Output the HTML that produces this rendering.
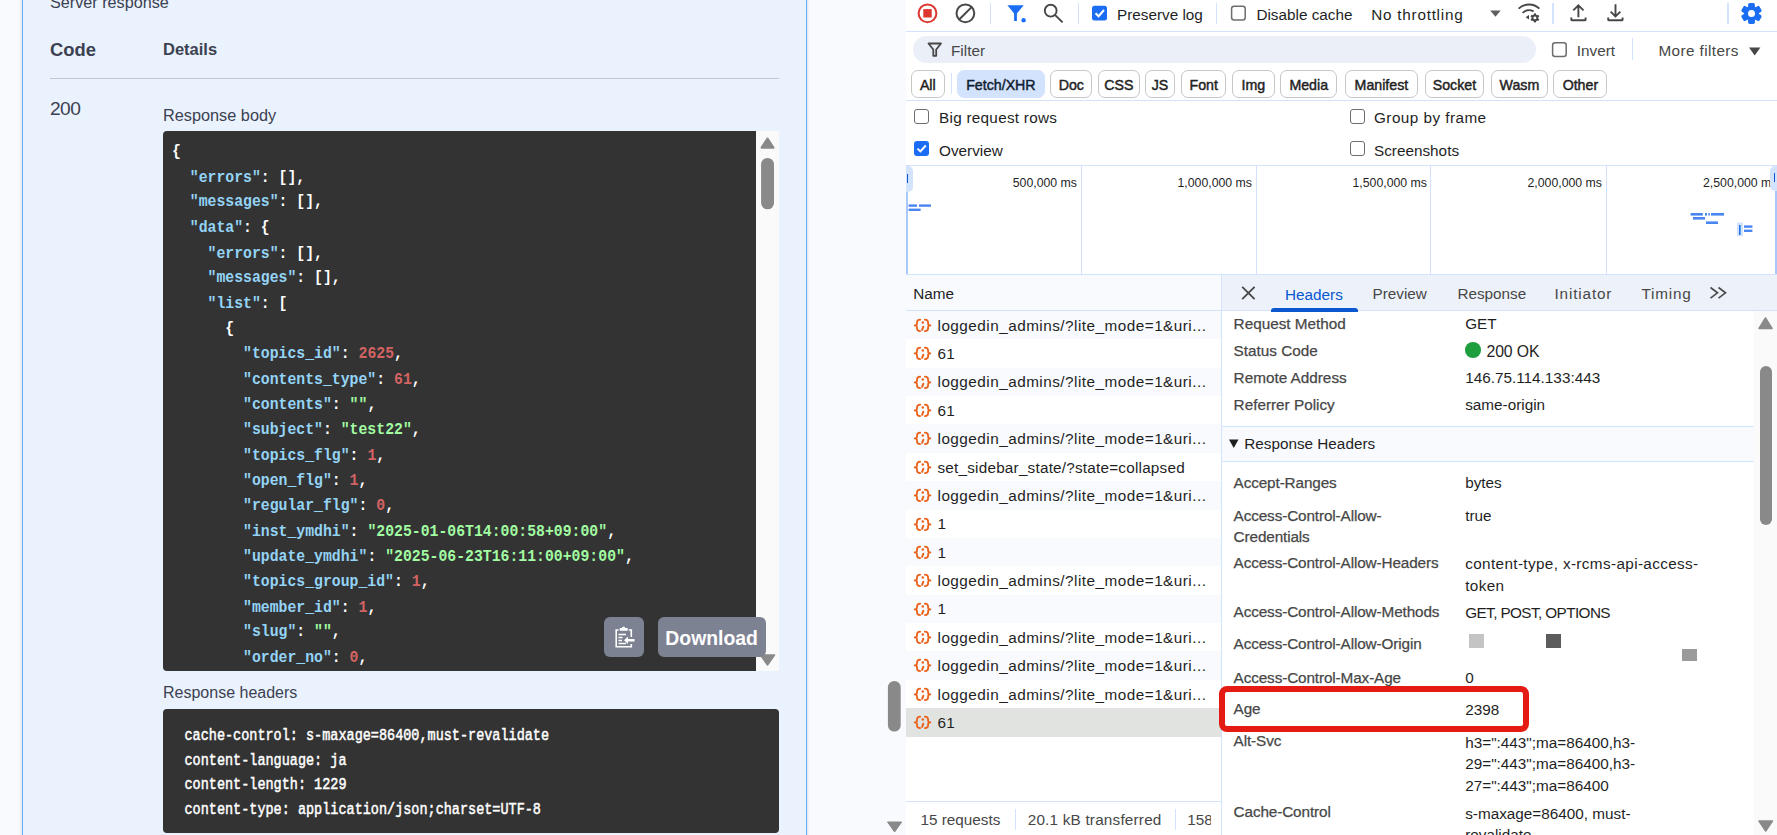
<!DOCTYPE html>
<html><head><meta charset="utf-8">
<style>
*{margin:0;padding:0;box-sizing:border-box}
html,body{width:1777px;height:835px;overflow:hidden;background:#f9fafd;font-family:"Liberation Sans",sans-serif}
.a{position:absolute;white-space:pre}
.r{position:absolute}
.sw{color:#3b4151}
.k{color:#94d4f6}.s{color:#a2fca2}.n{color:#d36363}
#dt{position:absolute;left:906px;top:0;width:871px;height:835px;background:#fff;overflow:hidden;color:#1f1f1f;font-size:15.3px}
.hl{position:absolute;height:1px;background:#d3e3fd}
.vl{position:absolute;width:1px;background:#d3e3fd}
.cb{position:absolute;width:15px;height:15px;border:1.5px solid #6d6d6d;border-radius:3px;background:#fff}
.cbc{position:absolute;width:15px;height:15px;border-radius:3px;background:#1b6ef3}
.chip{position:absolute;top:70.2px;height:27.8px;border:1px solid #c7c7c7;border-radius:7px;font-size:14.2px;text-align:center;line-height:29px;color:#1f1f1f;-webkit-text-stroke:0.45px #1f1f1f}
.g{color:#474747}
.lb{color:#474747;-webkit-text-stroke:0.25px #474747}
</style></head><body>

<div class="r" style="left:22px;top:-40px;width:785px;height:900px;background:#eaf2fd;border:1px solid #61affe;box-shadow:0 0 3px rgba(0,0,0,.19)"></div>
<div class="a sw" style="left:50px;top:-7.13px;font-size:16.2px;">Server response</div>
<div class="a sw" style="left:50px;top:38.95px;font-size:18.4px;font-weight:bold;">Code</div>
<div class="a sw" style="left:163px;top:39.80px;font-size:16.5px;font-weight:bold;">Details</div>
<div class="r" style="left:50px;top:78px;width:729px;height:1px;background:#c3c9d1"></div>
<div class="a sw" style="left:50px;top:97.91px;font-size:19.2px;letter-spacing:-0.6px">200</div>
<div class="a sw" style="left:163px;top:105.58px;font-size:16.3px;">Response body</div>
<div class="r" style="left:163px;top:131px;width:593px;height:540px;background:#333;border-radius:4px 0 0 4px;overflow:hidden">
<pre class="a" style="left:9px;top:9.44px;font-family:'Liberation Mono',monospace;font-weight:bold;font-size:14.8px;line-height:23.6449px;color:#fff;transform:scaleY(1.07);transform-origin:0 0">{
  <span class="k">"errors"</span>: [],
  <span class="k">"messages"</span>: [],
  <span class="k">"data"</span>: {
    <span class="k">"errors"</span>: [],
    <span class="k">"messages"</span>: [],
    <span class="k">"list"</span>: [
      {
        <span class="k">"topics_id"</span>: <span class="n">2625</span>,
        <span class="k">"contents_type"</span>: <span class="n">61</span>,
        <span class="k">"contents"</span>: <span class="s">""</span>,
        <span class="k">"subject"</span>: <span class="s">"test22"</span>,
        <span class="k">"topics_flg"</span>: <span class="n">1</span>,
        <span class="k">"open_flg"</span>: <span class="n">1</span>,
        <span class="k">"regular_flg"</span>: <span class="n">0</span>,
        <span class="k">"inst_ymdhi"</span>: <span class="s">"2025-01-06T14:00:58+09:00"</span>,
        <span class="k">"update_ymdhi"</span>: <span class="s">"2025-06-23T16:11:00+09:00"</span>,
        <span class="k">"topics_group_id"</span>: <span class="n">1</span>,
        <span class="k">"member_id"</span>: <span class="n">1</span>,
        <span class="k">"slug"</span>: <span class="s">""</span>,
        <span class="k">"order_no"</span>: <span class="n">0</span>,
        <span class="k">"group_nm"</span>: <span class="s">"test"</span>,</pre></div>
<div class="r" style="left:756px;top:131px;width:23px;height:540px;background:#fafafa"></div>
<svg class="a" style="left:756px;top:131px" width="23" height="540"><path d="M5.6 16.6 L11.5 7.6 L17.4 16.6 Z" fill="#898989" stroke="#898989" stroke-width="2.2" stroke-linejoin="round"/><rect x="5.1" y="27" width="12.9" height="51.3" rx="6.4" fill="#898989"/><path d="M4.5 524 L11.5 534 L18.5 524 Z" fill="#898989" stroke="#898989" stroke-width="1.5" stroke-linejoin="round"/></svg>
<div class="r" style="left:604px;top:617px;width:40px;height:40px;background:#7d8293;border-radius:6px"></div>
<svg class="a" style="left:604px;top:617px" width="40" height="40"><g fill="none" stroke="#fff" stroke-width="1.6">
<path d="M14.5 13 H12.2 V29.8 H27.3 V27"/><path d="M24.8 13 H27.3 V20"/>
<path d="M16 13.2 H23.3 V11.5 H21.4 A1.8 1.8 0 0 0 17.9 11.5 H16 Z" fill="#fff" stroke-width="1"/>
<path d="M14.5 17.5 H22 M14.5 20.5 H18.5 M14.5 23.5 H18 M14.5 26.5 H22"/>
</g><path d="M20 23.2 L24 19.5 V22 H30.5 V24.5 H24 V27 Z" fill="#fff"/></svg>
<div class="r" style="left:658px;top:617px;width:108px;height:40px;background:#7d8293;border-radius:6px"></div>
<div class="a" style="left:665.3px;top:627.03px;font-size:19.4px;font-weight:bold;color:#fff">Download</div>
<div class="a sw" style="left:163px;top:684.16px;font-size:16px;">Response headers</div>
<div class="r" style="left:163px;top:709px;width:616px;height:124px;background:#333;border-radius:4px"></div>
<div class="a" style="left:184.5px;top:726.23px;font-family:'Liberation Mono',monospace;font-size:13.5px;line-height:15.29px;color:#fff;transform:scaleY(1.27);transform-origin:0 0;-webkit-text-stroke:0.4px #fff">cache-control: s-maxage=86400,must-revalidate</div>
<div class="a" style="left:184.5px;top:750.73px;font-family:'Liberation Mono',monospace;font-size:13.5px;line-height:15.29px;color:#fff;transform:scaleY(1.27);transform-origin:0 0;-webkit-text-stroke:0.4px #fff">content-language: ja</div>
<div class="a" style="left:184.5px;top:775.13px;font-family:'Liberation Mono',monospace;font-size:13.5px;line-height:15.29px;color:#fff;transform:scaleY(1.27);transform-origin:0 0;-webkit-text-stroke:0.4px #fff">content-length: 1229</div>
<div class="a" style="left:184.5px;top:799.53px;font-family:'Liberation Mono',monospace;font-size:13.5px;line-height:15.29px;color:#fff;transform:scaleY(1.27);transform-origin:0 0;-webkit-text-stroke:0.4px #fff">content-type: application/json;charset=UTF-8</div>
<svg class="a" style="left:880px;top:0" width="26" height="835"><rect x="7.9" y="681" width="12.8" height="50.6" rx="6.4" fill="#898989"/><path d="M7.5 822 H21.7 L14.6 832 Z" fill="#898989" stroke="#898989" stroke-width="1" stroke-linejoin="round"/></svg>
<div id="dt">
<svg class="a" style="left:0;top:0" width="871" height="31">
 <circle cx="21.5" cy="13.3" r="8.9" fill="none" stroke="#dc362e" stroke-width="2"/>
 <rect x="17.3" y="9.1" width="8.4" height="8.4" fill="#dc362e"/>
 <circle cx="59.4" cy="13.3" r="8.9" fill="none" stroke="#474747" stroke-width="2"/>
 <line x1="53.2" y1="19.5" x2="65.6" y2="7.1" stroke="#474747" stroke-width="2"/>
 <path d="M101.4 5.3 H117.7 L110.9 13.4 V21 H108.1 V13.4 Z" fill="#1b6ef3"/>
 <circle cx="117.6" cy="20.2" r="2.2" fill="#1b6ef3"/>
 <circle cx="144.7" cy="10.7" r="5.9" fill="none" stroke="#474747" stroke-width="1.9"/>
 <line x1="148.9" y1="14.9" x2="156.6" y2="22.4" stroke="#474747" stroke-width="2"/>
 <rect x="186" y="5.8" width="15" height="14.7" rx="2.5" fill="#1b6ef3"/>
 <path d="M189.5 13.2 L192.6 16.2 L198 10" fill="none" stroke="#fff" stroke-width="2"/>
 <rect x="325.6" y="6.3" width="13.6" height="13.6" rx="2.5" fill="none" stroke="#6d6d6d" stroke-width="1.5"/>
 <path d="M584.2 10.4 H594.7 L589.45 16.7 Z" fill="#5e5e5e"/>
 <g fill="none" stroke="#474747" stroke-width="1.8">
  <path d="M612.6 8.7 A15 15 0 0 1 633.4 8.7"/>
  <path d="M616.6 12.9 A9.5 9.5 0 0 1 627.6 11.4"/>
 </g>
 <path d="M619.6 17.2 L623 14.9 V19.5 Z" fill="#474747"/>
 <g transform="translate(628.9,17.9)">
  <g fill="#474747"><rect x="-1.1" y="-4.5" width="2.2" height="9"/><rect x="-1.1" y="-4.5" width="2.2" height="9" transform="rotate(60)"/><rect x="-1.1" y="-4.5" width="2.2" height="9" transform="rotate(120)"/><circle r="3.4"/></g>
  <circle r="1.45" fill="#fff"/>
 </g>
 <path d="M672.4 5.6 V17.2 M667.3 10.4 L672.4 5.3 L677.5 10.4" fill="none" stroke="#474747" stroke-width="1.9"/>
 <path d="M665.3 17.4 V19.4 Q665.3 20.3 666.2 20.3 H678.7 Q679.6 20.3 679.6 19.4 V17.4" fill="none" stroke="#474747" stroke-width="1.9"/>
 <path d="M709.5 4.2 V16 M704.6 11.6 L709.5 16.5 L714.4 11.6" fill="none" stroke="#474747" stroke-width="1.9"/>
 <path d="M702.2 17.4 V19.4 Q702.2 20.3 703.1 20.3 H715.7 Q716.6 20.3 716.6 19.4 V17.4" fill="none" stroke="#474747" stroke-width="1.9"/>
 <g transform="translate(845.5,13.5)" fill="#1b6ef3">
  <circle r="7.4"/>
  <rect x="-3.4" y="-10.4" width="6.8" height="20.8" rx="1.6"/>
  <rect x="-3.4" y="-10.4" width="6.8" height="20.8" rx="1.6" transform="rotate(60)"/>
  <rect x="-3.4" y="-10.4" width="6.8" height="20.8" rx="1.6" transform="rotate(120)"/>
  <circle r="3.5" fill="#fff"/>
 </g>
</svg>
<div class="vl" style="left:84px;top:3px;height:21px;width:1px"></div>
<div class="vl" style="left:172px;top:3px;height:21px;width:1px"></div>
<div class="vl" style="left:310px;top:3px;height:21px;width:1px"></div>
<div class="vl" style="left:646px;top:3px;height:21px;width:2px"></div>
<div class="vl" style="left:821px;top:3px;height:21px;width:2px"></div>
<div class="a " style="left:211.00px;top:5.80px;">Preserve log</div>
<div class="a " style="left:350.40px;top:5.80px;">Disable cache</div>
<div class="a " style="left:465.30px;top:5.70px;letter-spacing:0.74px">No throttling</div>
<div class="hl" style="left:0;top:31px;width:871px"></div>
<div class="r" style="left:7px;top:36.2px;width:623px;height:26.6px;border-radius:14px;background:#eaeff8"></div>
<svg class="a" style="left:0;top:31px" width="871" height="70">
 <path d="M22.5 12.5 H35 L30.2 18.5 V24.8 H27.3 V18.5 Z" fill="none" stroke="#474747" stroke-width="1.8" stroke-linejoin="round"/>
 <rect x="646.6" y="11.8" width="13.6" height="13.6" rx="2.5" fill="none" stroke="#6d6d6d" stroke-width="1.5"/>
 <path d="M843 16.4 H854.4 L848.7 24.6 Z" fill="#474747"/>
</svg>
<div class="a g" style="left:45.00px;top:42.00px;">Filter</div>
<div class="a g" style="left:670.80px;top:42.00px;">Invert</div>
<div class="vl" style="left:726.3px;top:38px;height:22px"></div>
<div class="a g" style="left:752.40px;top:42.00px;letter-spacing:0.4px">More filters</div>
<div class="chip" style="left:5.0px;width:33.6px;">All</div>
<div class="chip" style="left:51.0px;width:87.8px;background:#d3e3fd;border-color:#d3e3fd;color:#041e49;">Fetch/XHR</div>
<div class="chip" style="left:144.2px;width:42.2px;">Doc</div>
<div class="chip" style="left:192.0px;width:41.7px;">CSS</div>
<div class="chip" style="left:239.3px;width:29.3px;">JS</div>
<div class="chip" style="left:275.0px;width:45.4px;">Font</div>
<div class="chip" style="left:326.0px;width:42.6px;">Img</div>
<div class="chip" style="left:374.2px;width:57.1px;">Media</div>
<div class="chip" style="left:438.5px;width:73.8px;">Manifest</div>
<div class="chip" style="left:518.6px;width:59.7px;">Socket</div>
<div class="chip" style="left:585.2px;width:56.5px;">Wasm</div>
<div class="chip" style="left:647.4px;width:54.0px;">Other</div>
<div class="vl" style="left:45.4px;top:73px;height:21px"></div>
<div class="hl" style="left:0;top:100px;width:871px"></div>
<div class="cb" style="left:8px;top:109px"></div>
<div class="a " style="left:33.00px;top:108.70px;letter-spacing:0.27px">Big request rows</div>
<div class="cbc" style="left:8px;top:141px"><svg width="15" height="15" style="position:absolute;left:0;top:0"><path d="M3.5 7.6 L6.4 10.4 L11.8 4.5" fill="none" stroke="#fff" stroke-width="2"/></svg></div>
<div class="a " style="left:33.00px;top:141.60px;">Overview</div>
<div class="cb" style="left:444.3px;top:109px"></div>
<div class="a " style="left:468.00px;top:108.70px;letter-spacing:0.45px">Group by frame</div>
<div class="cb" style="left:444.3px;top:141px"></div>
<div class="a " style="left:468.00px;top:141.60px;">Screenshots</div>
<div class="hl" style="left:0;top:165px;width:871px"></div>
<div class="vl" style="left:175px;top:166px;height:108px"></div>
<div class="vl" style="left:350px;top:166px;height:108px"></div>
<div class="vl" style="left:524px;top:166px;height:108px"></div>
<div class="vl" style="left:700px;top:166px;height:108px"></div>
<div class="a" style="right:700.0px;top:175.67px;font-size:12.3px">500,000 ms</div>
<div class="a" style="right:525.0px;top:175.67px;font-size:12.3px">1,000,000 ms</div>
<div class="a" style="right:350.0px;top:175.67px;font-size:12.3px">1,500,000 ms</div>
<div class="a" style="right:175.0px;top:175.67px;font-size:12.3px">2,000,000 ms</div>
<div class="a" style="left:797px;top:175.67px;font-size:12.3px">2,500,000 ms</div>
<div class="r" style="left:0;top:166px;width:6.6px;height:26px;background:#d3e3fd;border-radius:0 5px 5px 0"></div>
<div class="r" style="left:1px;top:174px;width:1.2px;height:9px;background:#0b57d0"></div>
<div class="r" style="left:0;top:192px;width:2px;height:82px;background:#a8c7fa"></div>
<div class="r" style="left:864.4px;top:166px;width:6.6px;height:25px;background:#d3e3fd;border-radius:5px 0 0 5px"></div>
<div class="r" style="left:867.5px;top:173px;width:1.2px;height:9px;background:#0b57d0"></div>
<div class="r" style="left:869px;top:191px;width:2px;height:83px;background:#a8c7fa"></div>
<svg class="a" style="left:0;top:166px" width="871" height="108">
 <g fill="#4a86f0">
  <rect x="2.6" y="38.4" width="8.4" height="2.4"/><rect x="13" y="38.4" width="12" height="2.4"/>
  <rect x="2.6" y="42.6" width="12" height="2.4"/>
  <rect x="784.6" y="47" width="12.2" height="2.6"/><rect x="799" y="47" width="2" height="2.6"/><rect x="802.3" y="47" width="1.5" height="2.6"/><rect x="805" y="47" width="13" height="2.6"/>
  <rect x="787" y="51" width="12" height="2.6"/>
  <rect x="800" y="55.4" width="12" height="2.6"/>
  <rect x="838" y="59.4" width="8.4" height="2.4"/><rect x="838" y="63.6" width="8.4" height="2.4"/>
 </g>
 <rect x="831" y="56.6" width="6" height="13.6" fill="#d3e3fd"/>
 <rect x="833" y="59" width="1.6" height="10" fill="#1a73e8"/>
</svg>
<div class="hl" style="left:0;top:274px;width:871px"></div>
<div class="r" style="left:0;top:275px;width:315px;height:35.5px;background:#f8fafd"></div>
<div class="r" style="left:316px;top:275px;width:555px;height:35.5px;background:#edf2fa"></div>
<div class="a " style="left:7.30px;top:284.60px;">Name</div>
<div class="hl" style="left:0;top:310px;width:871px"></div>
<div class="vl" style="left:315px;top:275px;height:560px"></div>
<svg class="a" style="left:316px;top:275px" width="555" height="36">
 <path d="M20.2 11.8 L32.6 24.2 M32.6 11.8 L20.2 24.2" stroke="#474747" stroke-width="1.8"/>
 <path d="M488.5 12.5 L495.5 17.8 L488.5 23.1 M496.5 12.5 L503.5 17.8 L496.5 23.1" fill="none" stroke="#474747" stroke-width="1.6"/>
</svg>
<div class="a " style="left:379.00px;top:285.50px;color:#0b57d0">Headers</div>
<div class="r" style="left:365px;top:307.6px;width:87px;height:4px;background:#0b57d0;border-radius:3px 3px 0 0"></div>
<div class="a g" style="left:466.50px;top:285.40px;">Preview</div>
<div class="a g" style="left:551.40px;top:285.30px;">Response</div>
<div class="a g" style="left:648.50px;top:285.30px;letter-spacing:0.85px">Initiator</div>
<div class="a g" style="left:735.40px;top:285.30px;letter-spacing:0.8px">Timing</div>
<div class="r" style="left:0;top:311.00px;width:315px;height:28.37px;background:#f8fafd"></div>
<svg class="a" style="left:6px;top:317.00px" width="22" height="17"><g fill="none" stroke="#e9621a" stroke-width="1.8" stroke-linecap="round" stroke-linejoin="round"><path d="M8.2 2.7 Q5 2.7 5 5.6 V6.5 Q5 8.4 2.7 8.4 Q5 8.4 5 10.3 V11.2 Q5 14.1 8.2 14.1"/><path d="M12.9 2.7 Q16.1 2.7 16.1 5.6 V6.5 Q16.1 8.4 18.4 8.4 Q16.1 8.4 16.1 10.3 V11.2 Q16.1 14.1 12.9 14.1"/><path d="M11.3 9.8 L10.1 12.8" stroke-width="2"/></g><circle cx="10.8" cy="5.6" r="1.25" fill="#e9621a"/></svg>
<div class="a " style="left:31.50px;top:316.70px;letter-spacing:0.48px">loggedin_admins/?lite_mode=1&amp;uri...</div>
<div class="r" style="left:0;top:339.37px;width:315px;height:28.37px;background:#fff"></div>
<svg class="a" style="left:6px;top:345.37px" width="22" height="17"><g fill="none" stroke="#e9621a" stroke-width="1.8" stroke-linecap="round" stroke-linejoin="round"><path d="M8.2 2.7 Q5 2.7 5 5.6 V6.5 Q5 8.4 2.7 8.4 Q5 8.4 5 10.3 V11.2 Q5 14.1 8.2 14.1"/><path d="M12.9 2.7 Q16.1 2.7 16.1 5.6 V6.5 Q16.1 8.4 18.4 8.4 Q16.1 8.4 16.1 10.3 V11.2 Q16.1 14.1 12.9 14.1"/><path d="M11.3 9.8 L10.1 12.8" stroke-width="2"/></g><circle cx="10.8" cy="5.6" r="1.25" fill="#e9621a"/></svg>
<div class="a " style="left:31.50px;top:345.07px;letter-spacing:0.3px">61</div>
<div class="r" style="left:0;top:367.74px;width:315px;height:28.37px;background:#f8fafd"></div>
<svg class="a" style="left:6px;top:373.74px" width="22" height="17"><g fill="none" stroke="#e9621a" stroke-width="1.8" stroke-linecap="round" stroke-linejoin="round"><path d="M8.2 2.7 Q5 2.7 5 5.6 V6.5 Q5 8.4 2.7 8.4 Q5 8.4 5 10.3 V11.2 Q5 14.1 8.2 14.1"/><path d="M12.9 2.7 Q16.1 2.7 16.1 5.6 V6.5 Q16.1 8.4 18.4 8.4 Q16.1 8.4 16.1 10.3 V11.2 Q16.1 14.1 12.9 14.1"/><path d="M11.3 9.8 L10.1 12.8" stroke-width="2"/></g><circle cx="10.8" cy="5.6" r="1.25" fill="#e9621a"/></svg>
<div class="a " style="left:31.50px;top:373.44px;letter-spacing:0.48px">loggedin_admins/?lite_mode=1&amp;uri...</div>
<div class="r" style="left:0;top:396.11px;width:315px;height:28.37px;background:#fff"></div>
<svg class="a" style="left:6px;top:402.11px" width="22" height="17"><g fill="none" stroke="#e9621a" stroke-width="1.8" stroke-linecap="round" stroke-linejoin="round"><path d="M8.2 2.7 Q5 2.7 5 5.6 V6.5 Q5 8.4 2.7 8.4 Q5 8.4 5 10.3 V11.2 Q5 14.1 8.2 14.1"/><path d="M12.9 2.7 Q16.1 2.7 16.1 5.6 V6.5 Q16.1 8.4 18.4 8.4 Q16.1 8.4 16.1 10.3 V11.2 Q16.1 14.1 12.9 14.1"/><path d="M11.3 9.8 L10.1 12.8" stroke-width="2"/></g><circle cx="10.8" cy="5.6" r="1.25" fill="#e9621a"/></svg>
<div class="a " style="left:31.50px;top:401.81px;letter-spacing:0.3px">61</div>
<div class="r" style="left:0;top:424.48px;width:315px;height:28.37px;background:#f8fafd"></div>
<svg class="a" style="left:6px;top:430.48px" width="22" height="17"><g fill="none" stroke="#e9621a" stroke-width="1.8" stroke-linecap="round" stroke-linejoin="round"><path d="M8.2 2.7 Q5 2.7 5 5.6 V6.5 Q5 8.4 2.7 8.4 Q5 8.4 5 10.3 V11.2 Q5 14.1 8.2 14.1"/><path d="M12.9 2.7 Q16.1 2.7 16.1 5.6 V6.5 Q16.1 8.4 18.4 8.4 Q16.1 8.4 16.1 10.3 V11.2 Q16.1 14.1 12.9 14.1"/><path d="M11.3 9.8 L10.1 12.8" stroke-width="2"/></g><circle cx="10.8" cy="5.6" r="1.25" fill="#e9621a"/></svg>
<div class="a " style="left:31.50px;top:430.18px;letter-spacing:0.48px">loggedin_admins/?lite_mode=1&amp;uri...</div>
<div class="r" style="left:0;top:452.85px;width:315px;height:28.37px;background:#fff"></div>
<svg class="a" style="left:6px;top:458.85px" width="22" height="17"><g fill="none" stroke="#e9621a" stroke-width="1.8" stroke-linecap="round" stroke-linejoin="round"><path d="M8.2 2.7 Q5 2.7 5 5.6 V6.5 Q5 8.4 2.7 8.4 Q5 8.4 5 10.3 V11.2 Q5 14.1 8.2 14.1"/><path d="M12.9 2.7 Q16.1 2.7 16.1 5.6 V6.5 Q16.1 8.4 18.4 8.4 Q16.1 8.4 16.1 10.3 V11.2 Q16.1 14.1 12.9 14.1"/><path d="M11.3 9.8 L10.1 12.8" stroke-width="2"/></g><circle cx="10.8" cy="5.6" r="1.25" fill="#e9621a"/></svg>
<div class="a " style="left:31.50px;top:458.55px;letter-spacing:0.21px">set_sidebar_state/?state=collapsed</div>
<div class="r" style="left:0;top:481.22px;width:315px;height:28.37px;background:#f8fafd"></div>
<svg class="a" style="left:6px;top:487.22px" width="22" height="17"><g fill="none" stroke="#e9621a" stroke-width="1.8" stroke-linecap="round" stroke-linejoin="round"><path d="M8.2 2.7 Q5 2.7 5 5.6 V6.5 Q5 8.4 2.7 8.4 Q5 8.4 5 10.3 V11.2 Q5 14.1 8.2 14.1"/><path d="M12.9 2.7 Q16.1 2.7 16.1 5.6 V6.5 Q16.1 8.4 18.4 8.4 Q16.1 8.4 16.1 10.3 V11.2 Q16.1 14.1 12.9 14.1"/><path d="M11.3 9.8 L10.1 12.8" stroke-width="2"/></g><circle cx="10.8" cy="5.6" r="1.25" fill="#e9621a"/></svg>
<div class="a " style="left:31.50px;top:486.92px;letter-spacing:0.48px">loggedin_admins/?lite_mode=1&amp;uri...</div>
<div class="r" style="left:0;top:509.59px;width:315px;height:28.37px;background:#fff"></div>
<svg class="a" style="left:6px;top:515.59px" width="22" height="17"><g fill="none" stroke="#e9621a" stroke-width="1.8" stroke-linecap="round" stroke-linejoin="round"><path d="M8.2 2.7 Q5 2.7 5 5.6 V6.5 Q5 8.4 2.7 8.4 Q5 8.4 5 10.3 V11.2 Q5 14.1 8.2 14.1"/><path d="M12.9 2.7 Q16.1 2.7 16.1 5.6 V6.5 Q16.1 8.4 18.4 8.4 Q16.1 8.4 16.1 10.3 V11.2 Q16.1 14.1 12.9 14.1"/><path d="M11.3 9.8 L10.1 12.8" stroke-width="2"/></g><circle cx="10.8" cy="5.6" r="1.25" fill="#e9621a"/></svg>
<div class="a " style="left:31.50px;top:515.29px;letter-spacing:0.3px">1</div>
<div class="r" style="left:0;top:537.96px;width:315px;height:28.37px;background:#f8fafd"></div>
<svg class="a" style="left:6px;top:543.96px" width="22" height="17"><g fill="none" stroke="#e9621a" stroke-width="1.8" stroke-linecap="round" stroke-linejoin="round"><path d="M8.2 2.7 Q5 2.7 5 5.6 V6.5 Q5 8.4 2.7 8.4 Q5 8.4 5 10.3 V11.2 Q5 14.1 8.2 14.1"/><path d="M12.9 2.7 Q16.1 2.7 16.1 5.6 V6.5 Q16.1 8.4 18.4 8.4 Q16.1 8.4 16.1 10.3 V11.2 Q16.1 14.1 12.9 14.1"/><path d="M11.3 9.8 L10.1 12.8" stroke-width="2"/></g><circle cx="10.8" cy="5.6" r="1.25" fill="#e9621a"/></svg>
<div class="a " style="left:31.50px;top:543.66px;letter-spacing:0.3px">1</div>
<div class="r" style="left:0;top:566.33px;width:315px;height:28.37px;background:#fff"></div>
<svg class="a" style="left:6px;top:572.33px" width="22" height="17"><g fill="none" stroke="#e9621a" stroke-width="1.8" stroke-linecap="round" stroke-linejoin="round"><path d="M8.2 2.7 Q5 2.7 5 5.6 V6.5 Q5 8.4 2.7 8.4 Q5 8.4 5 10.3 V11.2 Q5 14.1 8.2 14.1"/><path d="M12.9 2.7 Q16.1 2.7 16.1 5.6 V6.5 Q16.1 8.4 18.4 8.4 Q16.1 8.4 16.1 10.3 V11.2 Q16.1 14.1 12.9 14.1"/><path d="M11.3 9.8 L10.1 12.8" stroke-width="2"/></g><circle cx="10.8" cy="5.6" r="1.25" fill="#e9621a"/></svg>
<div class="a " style="left:31.50px;top:572.03px;letter-spacing:0.48px">loggedin_admins/?lite_mode=1&amp;uri...</div>
<div class="r" style="left:0;top:594.70px;width:315px;height:28.37px;background:#f8fafd"></div>
<svg class="a" style="left:6px;top:600.70px" width="22" height="17"><g fill="none" stroke="#e9621a" stroke-width="1.8" stroke-linecap="round" stroke-linejoin="round"><path d="M8.2 2.7 Q5 2.7 5 5.6 V6.5 Q5 8.4 2.7 8.4 Q5 8.4 5 10.3 V11.2 Q5 14.1 8.2 14.1"/><path d="M12.9 2.7 Q16.1 2.7 16.1 5.6 V6.5 Q16.1 8.4 18.4 8.4 Q16.1 8.4 16.1 10.3 V11.2 Q16.1 14.1 12.9 14.1"/><path d="M11.3 9.8 L10.1 12.8" stroke-width="2"/></g><circle cx="10.8" cy="5.6" r="1.25" fill="#e9621a"/></svg>
<div class="a " style="left:31.50px;top:600.40px;letter-spacing:0.3px">1</div>
<div class="r" style="left:0;top:623.07px;width:315px;height:28.37px;background:#fff"></div>
<svg class="a" style="left:6px;top:629.07px" width="22" height="17"><g fill="none" stroke="#e9621a" stroke-width="1.8" stroke-linecap="round" stroke-linejoin="round"><path d="M8.2 2.7 Q5 2.7 5 5.6 V6.5 Q5 8.4 2.7 8.4 Q5 8.4 5 10.3 V11.2 Q5 14.1 8.2 14.1"/><path d="M12.9 2.7 Q16.1 2.7 16.1 5.6 V6.5 Q16.1 8.4 18.4 8.4 Q16.1 8.4 16.1 10.3 V11.2 Q16.1 14.1 12.9 14.1"/><path d="M11.3 9.8 L10.1 12.8" stroke-width="2"/></g><circle cx="10.8" cy="5.6" r="1.25" fill="#e9621a"/></svg>
<div class="a " style="left:31.50px;top:628.77px;letter-spacing:0.48px">loggedin_admins/?lite_mode=1&amp;uri...</div>
<div class="r" style="left:0;top:651.44px;width:315px;height:28.37px;background:#f8fafd"></div>
<svg class="a" style="left:6px;top:657.44px" width="22" height="17"><g fill="none" stroke="#e9621a" stroke-width="1.8" stroke-linecap="round" stroke-linejoin="round"><path d="M8.2 2.7 Q5 2.7 5 5.6 V6.5 Q5 8.4 2.7 8.4 Q5 8.4 5 10.3 V11.2 Q5 14.1 8.2 14.1"/><path d="M12.9 2.7 Q16.1 2.7 16.1 5.6 V6.5 Q16.1 8.4 18.4 8.4 Q16.1 8.4 16.1 10.3 V11.2 Q16.1 14.1 12.9 14.1"/><path d="M11.3 9.8 L10.1 12.8" stroke-width="2"/></g><circle cx="10.8" cy="5.6" r="1.25" fill="#e9621a"/></svg>
<div class="a " style="left:31.50px;top:657.14px;letter-spacing:0.48px">loggedin_admins/?lite_mode=1&amp;uri...</div>
<div class="r" style="left:0;top:679.81px;width:315px;height:28.37px;background:#fff"></div>
<svg class="a" style="left:6px;top:685.81px" width="22" height="17"><g fill="none" stroke="#e9621a" stroke-width="1.8" stroke-linecap="round" stroke-linejoin="round"><path d="M8.2 2.7 Q5 2.7 5 5.6 V6.5 Q5 8.4 2.7 8.4 Q5 8.4 5 10.3 V11.2 Q5 14.1 8.2 14.1"/><path d="M12.9 2.7 Q16.1 2.7 16.1 5.6 V6.5 Q16.1 8.4 18.4 8.4 Q16.1 8.4 16.1 10.3 V11.2 Q16.1 14.1 12.9 14.1"/><path d="M11.3 9.8 L10.1 12.8" stroke-width="2"/></g><circle cx="10.8" cy="5.6" r="1.25" fill="#e9621a"/></svg>
<div class="a " style="left:31.50px;top:685.51px;letter-spacing:0.48px">loggedin_admins/?lite_mode=1&amp;uri...</div>
<div class="r" style="left:0;top:708.18px;width:315px;height:28.37px;background:#e1e3e1"></div>
<svg class="a" style="left:6px;top:714.18px" width="22" height="17"><g fill="none" stroke="#e9621a" stroke-width="1.8" stroke-linecap="round" stroke-linejoin="round"><path d="M8.2 2.7 Q5 2.7 5 5.6 V6.5 Q5 8.4 2.7 8.4 Q5 8.4 5 10.3 V11.2 Q5 14.1 8.2 14.1"/><path d="M12.9 2.7 Q16.1 2.7 16.1 5.6 V6.5 Q16.1 8.4 18.4 8.4 Q16.1 8.4 16.1 10.3 V11.2 Q16.1 14.1 12.9 14.1"/><path d="M11.3 9.8 L10.1 12.8" stroke-width="2"/></g><circle cx="10.8" cy="5.6" r="1.25" fill="#e9621a"/></svg>
<div class="a " style="left:31.50px;top:713.88px;letter-spacing:0.3px">61</div>
<div class="hl" style="left:0;top:801px;width:315px"></div>
<div class="a g" style="left:14.40px;top:810.70px;">15 requests</div>
<div class="vl" style="left:108.5px;top:809px;height:21px"></div>
<div class="a g" style="left:121.70px;top:810.70px;letter-spacing:0.2px">20.1 kB transferred</div>
<div class="vl" style="left:268.5px;top:809px;height:21px"></div>
<div class="a g" style="left:281.3px;top:810.70px;width:24px;overflow:hidden">158 kB</div>
<div class="r" style="left:848px;top:311px;width:23px;height:524px;background:#fafafa"></div>
<div class="r" style="left:853.6px;top:366.4px;width:12px;height:159px;background:#898989;border-radius:6px"></div>
<svg class="a" style="left:848px;top:311px" width="23" height="524"><path d="M5 17.5 L11.5 7 L18 17.5 Z" fill="#898989" stroke="#898989" stroke-width="1.5" stroke-linejoin="round"/><path d="M5 510 L11.7 520 L18.4 510 Z" fill="#898989" stroke="#898989" stroke-width="1.5" stroke-linejoin="round"/></svg>
<div class="a lb" style="left:327.60px;top:314.80px;">Request Method</div>
<div class="a " style="left:559.20px;top:315.40px;">GET</div>
<div class="a lb" style="left:327.60px;top:341.70px;">Status Code</div>
<div class="a lb" style="left:327.60px;top:368.60px;">Remote Address</div>
<div class="a " style="left:559.20px;top:369.20px;">146.75.114.133:443</div>
<div class="a lb" style="left:327.60px;top:395.60px;">Referrer Policy</div>
<div class="a " style="left:559.20px;top:396.20px;">same-origin</div>
<div class="a " style="left:580.50px;top:343.14px;font-size:15.8px;letter-spacing:-0.1px">200 OK</div>
<div class="r" style="left:559.3px;top:342.3px;width:15.6px;height:15.6px;border-radius:50%;background:#1e9e3e"></div>
<div class="hl" style="left:316px;top:426px;width:532px"></div>
<div class="r" style="left:316px;top:427px;width:532px;height:34.5px;background:#f8fafd"></div>
<svg class="a" style="left:323px;top:439px" width="10" height="10"><path d="M0 0.5 H9.5 L4.75 9 Z" fill="#1f1f1f"/></svg>
<div class="a " style="left:338.20px;top:435.10px;">Response Headers</div>
<div class="hl" style="left:316px;top:461.3px;width:532px"></div>
<div class="a lb" style="left:327.6px;top:471.95px;line-height:21.5px;letter-spacing:-0.12px">Accept-Ranges</div>
<div class="a" style="left:559.2px;top:472.35px;line-height:21.5px;letter-spacing:0px">bytes</div>
<div class="a lb" style="left:327.6px;top:504.55px;line-height:21.5px;letter-spacing:-0.12px">Access-Control-Allow-
Credentials</div>
<div class="a" style="left:559.2px;top:505.35px;line-height:21.5px;letter-spacing:0px">true</div>
<div class="a lb" style="left:327.6px;top:552.35px;line-height:21.5px;letter-spacing:-0.12px">Access-Control-Allow-Headers</div>
<div class="a" style="left:559.2px;top:553.45px;line-height:21.5px;letter-spacing:0.36px">content-type, x-rcms-api-access-
token</div>
<div class="a lb" style="left:327.6px;top:601.25px;line-height:21.5px;letter-spacing:-0.12px">Access-Control-Allow-Methods</div>
<div class="a" style="left:559.2px;top:602.35px;line-height:21.5px;letter-spacing:-0.6px">GET, POST, OPTIONS</div>
<div class="a lb" style="left:327.6px;top:632.65px;line-height:21.5px;letter-spacing:-0.12px">Access-Control-Allow-Origin</div>
<div class="a lb" style="left:327.6px;top:666.65px;line-height:21.5px;letter-spacing:-0.12px">Access-Control-Max-Age</div>
<div class="a" style="left:559.2px;top:667.45px;line-height:21.5px;letter-spacing:0px">0</div>
<div class="a lb" style="left:327.6px;top:698.35px;line-height:21.5px;letter-spacing:-0.12px">Age</div>
<div class="a" style="left:559.2px;top:699.45px;line-height:21.5px;letter-spacing:0px">2398</div>
<div class="a lb" style="left:327.6px;top:730.15px;line-height:21.5px;letter-spacing:-0.12px">Alt-Svc</div>
<div class="a" style="left:559.2px;top:731.85px;line-height:21.5px;letter-spacing:0px">h3=":443";ma=86400,h3-
29=":443";ma=86400,h3-
27=":443";ma=86400</div>
<div class="a lb" style="left:327.6px;top:801.35px;line-height:21.5px;letter-spacing:-0.12px">Cache-Control</div>
<div class="a" style="left:559.2px;top:802.55px;line-height:21.5px;letter-spacing:0px">s-maxage=86400, must-
revalidate</div>
<div class="r" style="left:563px;top:633.7px;width:15px;height:14.7px;background:#c4c4c4"></div>
<div class="r" style="left:639.9px;top:633.7px;width:15.2px;height:14.7px;background:#5c5c5c"></div>
<div class="r" style="left:776.2px;top:648.9px;width:14.7px;height:11.8px;background:#9a9a9a"></div>
<div class="r" style="left:313.4px;top:686.2px;width:309.3px;height:46.2px;border:6.9px solid #e31b12;border-radius:8px"></div>
</div>
</body></html>
